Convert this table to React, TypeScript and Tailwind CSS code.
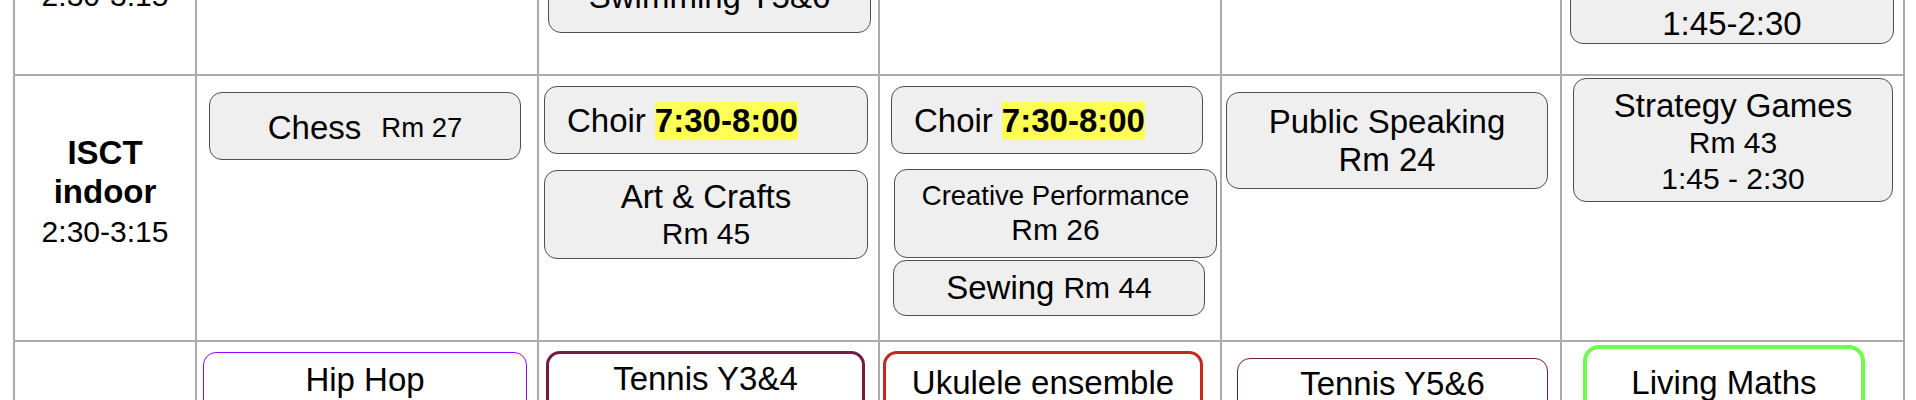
const cell = "border-r-2 border-b-2 border-[#ababab]";
const box = "rounded-[13px] border-[1.5px] border-[#4f4f4f] bg-[#efefef]";

function TopRow() {
  return (
    <>
      <div className={`${cell} flex h-[76px] flex-col items-center justify-end pb-[60px]`}>
        <div className="text-[30px] leading-[36px] whitespace-nowrap">2:30-3:15</div>
      </div>
      <div className={`${cell} h-[76px]`} />
      <div className={`${cell} flex h-[76px] flex-col justify-end pb-[41px] pl-[9px]`}>
        <div className={`${box} flex w-[323px] shrink-0 flex-col items-center bg-[#d5e1f2] pt-[30px] pb-[16px]`}>
          <div className="text-[33px] leading-[38px] whitespace-nowrap">Swimming Y5&amp;6</div>
        </div>
      </div>
      <div className={`${cell} h-[76px]`} />
      <div className={`${cell} h-[76px]`} />
      <div className={`${cell} flex h-[76px] flex-col justify-end pb-[30px] pl-[8px]`}>
        <div className={`${box} flex w-[324px] shrink-0 flex-col items-center bg-[#d9d2e9] pt-[30px] pb-0`}>
          <div className="text-[33px] leading-[38px] whitespace-nowrap">1:45-2:30</div>
        </div>
      </div>
    </>
  );
}

function Choir({ className }: { className: string }) {
  return (
    <div className={`${box} flex h-[68px] items-center pt-[2px] pl-[22px] text-[33px] leading-[38px] whitespace-nowrap ${className}`}>
      <span>Choir</span>
      <span className="ml-[9px] bg-[#ffff55] font-bold">7:30-8:00</span>
    </div>
  );
}

function IndoorRow() {
  return (
    <>
      <div className={`${cell} flex h-[266px] flex-col items-center pt-[58px]`}>
        <div className="text-[33px] leading-[38px] font-bold">ISCT</div>
        <div className="text-[33px] leading-[40px] font-bold">indoor</div>
        <div className="mt-[2px] text-[30px] leading-[36px]">2:30-3:15</div>
      </div>

      <div className={`${cell} h-[266px] pt-[16px] pl-[12px]`}>
        <div className={`${box} flex h-[68px] w-[312px] items-center justify-center pt-[3px] text-[33px] leading-[38px] whitespace-nowrap`}>
          <span>Chess</span>
          <span className="ml-[20px] text-[27.5px]">Rm 27</span>
        </div>
      </div>

      <div className={`${cell} flex h-[266px] flex-col gap-[16px] pt-[10px] pl-[5px]`}>
        <Choir className="w-[324px]" />
        <div className={`${box} flex h-[89px] w-[324px] flex-col items-center justify-center`}>
          <div className="text-[33px] leading-[38px]">Art &amp; Crafts</div>
          <div className="text-[30px] leading-[36px]">Rm 45</div>
        </div>
      </div>

      <div className={`${cell} flex h-[266px] flex-col pt-[10px]`}>
        <Choir className="ml-[11px] w-[312px]" />
        <div className={`${box} mt-[15px] ml-[14px] flex h-[89px] w-[323px] flex-col items-center justify-center`}>
          <div className="text-[27.5px] leading-[32px] whitespace-nowrap">Creative Performance</div>
          <div className="text-[30px] leading-[36px]">Rm 26</div>
        </div>
        <div className={`${box} mt-[2px] ml-[13px] flex h-[56px] w-[312px] items-center justify-center text-[33px] leading-[38px] whitespace-nowrap`}>
          <span>Sewing</span>
          <span className="ml-[9px] text-[30px]">Rm 44</span>
        </div>
      </div>

      <div className={`${cell} h-[266px] pt-[16px] pl-[4px]`}>
        <div className={`${box} flex h-[97px] w-[322px] flex-col items-center justify-center pt-[1px] text-[33px] leading-[38px]`}>
          <div>Public Speaking</div>
          <div>Rm 24</div>
        </div>
      </div>

      <div className={`${cell} h-[266px] pt-[2px] pl-[11px]`}>
        <div className={`${box} flex h-[124px] w-[320px] flex-col items-center justify-center pt-[3px]`}>
          <div className="text-[33px] leading-[38px]">Strategy Games</div>
          <div className="text-[30px] leading-[36px]">Rm 43</div>
          <div className="text-[30px] leading-[36px]">1:45 - 2:30</div>
        </div>
      </div>
    </>
  );
}

function OutdoorRow() {
  return (
    <>
      <div className={`${cell} h-[120px]`} />
      <div className={`${cell} h-[120px] pt-[10px] pl-[6px]`}>
        <div className="h-[120px] w-[324px] rounded-[13px] border-[1.5px] border-[#9900ff] bg-white pt-[8px] text-center text-[33px] leading-[38px]">
          Hip Hop
        </div>
      </div>
      <div className={`${cell} h-[120px] pt-[9px] pl-[7px]`}>
        <div className="h-[120px] w-[319px] rounded-[14px] border-[3px] border-[#741b47] bg-white pt-[6px] text-center text-[33px] leading-[38px]">
          Tennis Y3&amp;4
        </div>
      </div>
      <div className={`${cell} h-[120px] pt-[9px] pl-[3px]`}>
        <div className="h-[120px] w-[320px] rounded-[14px] border-[3px] border-[#c8281c] bg-white pt-[10px] text-center text-[33px] leading-[38px] whitespace-nowrap">
          Ukulele ensemble
        </div>
      </div>
      <div className={`${cell} h-[120px] pt-[16px] pl-[15px]`}>
        <div className="h-[120px] w-[311px] rounded-[13px] border-[1.5px] border-[#741b47] bg-white pt-[6px] text-center text-[33px] leading-[38px]">
          Tennis Y5&amp;6
        </div>
      </div>
      <div className={`${cell} h-[120px] pt-[3px] pl-[21px]`}>
        <div className="h-[120px] w-[282px] rounded-[16px] border-[4px] border-[#6cff4c] bg-white pt-[15px] text-center text-[33px] leading-[38px]">
          Living Maths
        </div>
      </div>
    </>
  );
}

export default function App() {
  return (
    <div className="h-[400px] w-[1916px] overflow-hidden bg-white font-['Liberation_Sans',Arial,sans-serif] text-black">
      <div className="ml-[13px] grid w-[1892px] grid-cols-[182px_342px_341px_342px_340px_343px] border-l-2 border-[#ababab]">
        <TopRow />
        <IndoorRow />
        <OutdoorRow />
      </div>
    </div>
  );
}
